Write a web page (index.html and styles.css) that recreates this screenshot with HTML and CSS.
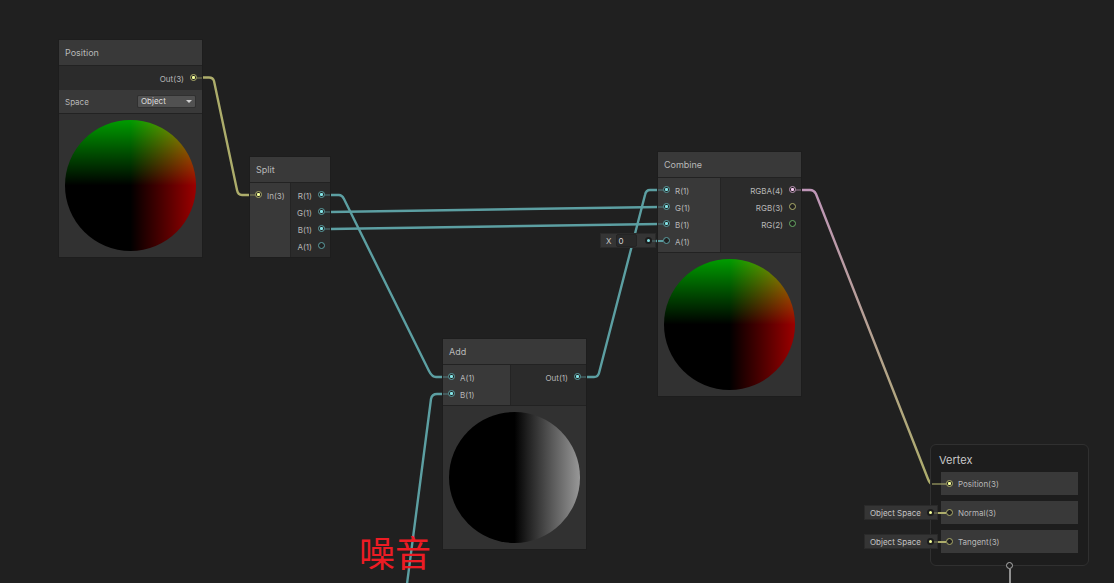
FILE: index.html
```html
<!DOCTYPE html>
<html lang="en">
<head>
<meta charset="utf-8">
<title>Shader Graph</title>
<link rel="stylesheet" href="styles.css">
</head>
<body>
<main class="canvas">
  <svg class="wires" aria-hidden="true">
    <defs>
      <linearGradient id="fade" gradientUnits="userSpaceOnUse" x1="802" y1="190" x2="930" y2="484">
        <stop offset="0" stop-color="#bf96b9"/>
        <stop offset="1" stop-color="#adad6b"/>
      </linearGradient>
    </defs>
    <path class="vec3" d="M202 77.500H209Q213 77.500 214 81L237 190Q238 195 242 195H251"/>
    <path class="vec1" d="M330 195H339Q342 195 344 199L429 371Q432 377 436 377H443"/>
    <path class="vec1" d="M330 212L659 207"/>
    <path class="vec1" d="M330 229L659 224"/>
    <path class="vec1" d="M586 377H594Q598 377 599 373L645 195Q646 190 650 190H659"/>
    <path class="vec1" d="M443 394H437Q432 394 431 399L407 584"/>
    <path class="vec1" d="M655 241H664"/>
    <path stroke="url(#fade)" d="M801 190H810Q814 190 816 194L928 479Q930 484 932 484"/>
  </svg>

  <section class="node node-position">
    <h2 class="title">Position</h2>
    <div class="ports">
      <ul class="outputs"><li class="port c3 linked">Out(3)<i class="dot"></i></li></ul>
    </div>
    <div class="control">
      <label for="space">Space</label>
      <span class="picker">
        <select id="space"><option>Object</option><option>View</option><option>World</option></select>
        <svg class="caret" viewBox="0 0 6 3" aria-hidden="true"><path d="M0 0H6L3 3Z"/></svg>
      </span>
    </div>
    <div class="preview"><div class="sphere color"></div></div>
  </section>

  <section class="node node-split">
    <h2 class="title">Split</h2>
    <div class="ports">
      <ul class="inputs"><li class="port c3 linked"><i class="dot"></i>In(3)</li></ul>
      <ul class="outputs">
        <li class="port c1 linked">R(1)<i class="dot"></i></li>
        <li class="port c1 linked">G(1)<i class="dot"></i></li>
        <li class="port c1 linked">B(1)<i class="dot"></i></li>
        <li class="port c1">A(1)<i class="dot"></i></li>
      </ul>
    </div>
  </section>

  <section class="node node-add">
    <h2 class="title">Add</h2>
    <div class="ports">
      <ul class="inputs">
        <li class="port c1 linked"><i class="dot"></i>A(1)</li>
        <li class="port c1 linked"><i class="dot"></i>B(1)</li>
      </ul>
      <ul class="outputs"><li class="port c1 linked">Out(1)<i class="dot"></i></li></ul>
    </div>
    <div class="preview"><div class="sphere gray"></div></div>
  </section>

  <section class="node node-combine">
    <h2 class="title">Combine</h2>
    <div class="ports">
      <ul class="inputs">
        <li class="port c1 linked"><i class="dot"></i>R(1)</li>
        <li class="port c1 linked"><i class="dot"></i>G(1)</li>
        <li class="port c1 linked"><i class="dot"></i>B(1)</li>
        <li class="port c1 direct"><i class="dot"></i>A(1)</li>
      </ul>
      <ul class="outputs">
        <li class="port c4 linked">RGBA(4)<i class="dot"></i></li>
        <li class="port c3">RGB(3)<i class="dot"></i></li>
        <li class="port c2">RG(2)<i class="dot"></i></li>
      </ul>
    </div>
    <div class="preview"><div class="sphere color"></div></div>
  </section>

  <div class="slot slot-x c1">
    <label for="x">X</label>
    <input id="x" type="text" value="0">
    <i class="pin"></i>
  </div>

  <section class="stack">
    <h2 class="stack-title">Vertex</h2>
    <ul class="blocks">
      <li class="block port c3 linked"><i class="dot"></i>Position(3)</li>
      <li class="block port c3 direct"><i class="dot"></i>Normal(3)</li>
      <li class="block port c3 direct"><i class="dot"></i>Tangent(3)</li>
    </ul>
    <i class="tail"></i>
  </section>
  <div class="slot slot-normal c3">Object Space<i class="pin"></i></div>
  <div class="slot slot-tangent c3">Object Space<i class="pin"></i></div>

  <p class="note" lang="zh">噪音</p>
</main>
</body>
</html>
```

FILE: styles.css
```css
* { box-sizing: border-box; }
body {
  margin: 0;
  background: #202020;
  color: #b8b8b8;
  font: 8px/16px Inter, "Noto Sans CJK SC", sans-serif;
}
h2, ul, p { margin: 0; padding: 0; font-weight: 400; }
ul { list-style: none; }

.canvas { position: relative; min-height: 100vh; overflow: hidden; }
.wires { position: absolute; inset: 0; width: 100%; height: 100%; fill: none; stroke-width: 2.4; }
.vec1 { stroke: #5c9fa2; }
.vec3 { stroke: #adad6b; }

.c1 { --port: #84e4e7; --wire: #5c9fa2; }
.c2 { --port: #6fc26c; --wire: #68ad65; }
.c3 { --port: #f6ff9a; --wire: #adad6b; }
.c4 { --port: #fbcbf4; --wire: #bf96b9; }

/* Nodes on the free canvas */
.node { position: absolute; width: 143px; background: #222; outline: 1px solid #1d1d1d; }
.node-position { left: 59px; top: 40px; }
.node-split { left: 250px; top: 157px; width: 80px; }
.node-add { left: 443px; top: 339px; }
.node-combine { left: 658px; top: 152px; }

.title { height: 25px; padding-left: 6px; background: #393939; font-size: 9px; line-height: 25px; }
.ports { display: flex; margin-top: 1px; background: #2b2b2b; }
.inputs, .outputs { padding: 4px 5px 2px; }
.inputs { background: #393939; border-right: 1px solid #242424; }
.outputs { flex: 1; }
.node-split .inputs { width: 41px; }
.node-add .inputs { width: 68px; }
.node-combine .inputs { width: 63px; }
.node-position .outputs { padding-bottom: 3px; }

.port { position: relative; display: flex; align-items: center; gap: 5px; height: 17px; padding-top: 2px; line-height: 15px; }
.outputs .port { justify-content: flex-end; gap: 6px; }
.dot {
  position: relative;
  flex: none;
  width: 7px;
  height: 7px;
  margin-bottom: 4px;
  border: 1px solid var(--wire);
  border-radius: 50%;
  background: #202020;
}
.linked .dot::before {
  content: "";
  position: absolute;
  inset: 1px;
  border-radius: 1px;
  background: var(--port);
}
.linked .dot::after, .direct .dot::after {
  content: "";
  position: absolute;
  top: 2px;
  width: 5px;
  height: 2px;
  background: var(--wire);
  opacity: .35;
}
.inputs .dot::after, .block .dot::after { right: 6px; }
.outputs .dot::after { left: 6px; }

.control {
  display: flex;
  align-items: center;
  justify-content: space-between;
  height: 23px;
  padding: 0 7px 0 6px;
  background: #393939;
}
.picker { position: relative; display: flex; }
.picker select {
  width: 57px;
  height: 11px;
  padding: 0 3px;
  border: 0;
  border-radius: 1px;
  background: #515151;
  box-shadow: 0 0 0 1px #303030;
  color: #dedede;
  font: inherit;
  line-height: 11px;
  appearance: none;
}
.caret { position: absolute; right: 3px; top: 4px; width: 6px; height: 3px; fill: #d0d0d0; pointer-events: none; }

.preview { margin-top: 1px; padding: 6px; background: #313131; }
.sphere { aspect-ratio: 1; border-radius: 50%; }
.color {
  background:
    linear-gradient(to right, #000 50%, #200000 60%, #5a0000 79%, #9c0000),
    linear-gradient(to top, #000 50%, #002000 60%, #005a00 79%, #009c00);
  background-blend-mode: screen;
}
.gray { background: linear-gradient(to right, #000 50%, #202020 60%, #5a5a5a 79%, #989898); }

/* Inline default values */
.slot {
  position: absolute;
  display: flex;
  align-items: center;
  height: 15px;
  padding: 0 4px 0 6px;
  background: #353535;
  outline: 1px solid #2a2a2a;
  outline-offset: -1px;
  color: #c4c4c4;
}
.slot-x { left: 600px; top: 233px; width: 56px; gap: 5px; }
.slot-x input {
  width: 21px;
  height: 13px;
  padding: 0 1px;
  border: 1px solid #242424;
  border-radius: 2px;
  background: #292929;
  color: #d8d8d8;
  font: inherit;
}
.slot-normal, .slot-tangent { left: 864px; width: 74px; }
.slot-normal { top: 505px; }
.slot-tangent { top: 534px; }
.pin {
  position: relative;
  flex: none;
  width: 7px;
  height: 7px;
  margin-left: auto;
  border: 2px solid #1c1c1c;
  border-radius: 50%;
  background: var(--port);
}
.pin::after {
  content: "";
  position: absolute;
  left: 5px;
  top: 1px;
  width: 4px;
  height: 2px;
  background: var(--wire);
  opacity: .3;
}

/* Vertex stack */
.stack {
  position: absolute;
  left: 930px;
  top: 444px;
  width: 159px;
  padding: 8px 10px 12px;
  border: 1px solid #303030;
  border-radius: 6px;
  background: #1d1d1d;
}
.stack-title { height: 19px; margin-left: -2px; color: #c8c8c8; font-size: 11px; line-height: 15px; }
.blocks { display: grid; gap: 6px; }
.block { height: 23px; padding-left: 5px; background: #393939; }
.block .dot { margin-bottom: 2px; }
.block .dot::after { width: 8px; }
.block.linked .dot::after { width: 14px; opacity: .55; }
.port.direct .dot::after { opacity: 1; }
.tail {
  position: absolute;
  left: 75px;
  bottom: -4px;
  width: 7px;
  height: 7px;
  border: 1px solid #b0b0b0;
  border-radius: 50%;
  background: #202020;
}
.tail::after {
  content: "";
  position: absolute;
  left: 2px;
  top: 6px;
  width: 2px;
  height: 20px;
  background: #919191;
}

.note {
  position: absolute;
  left: 359px;
  top: 533px;
  color: #ed1c24;
  font: 36px/36px "Noto Sans CJK SC", sans-serif;
}
```
